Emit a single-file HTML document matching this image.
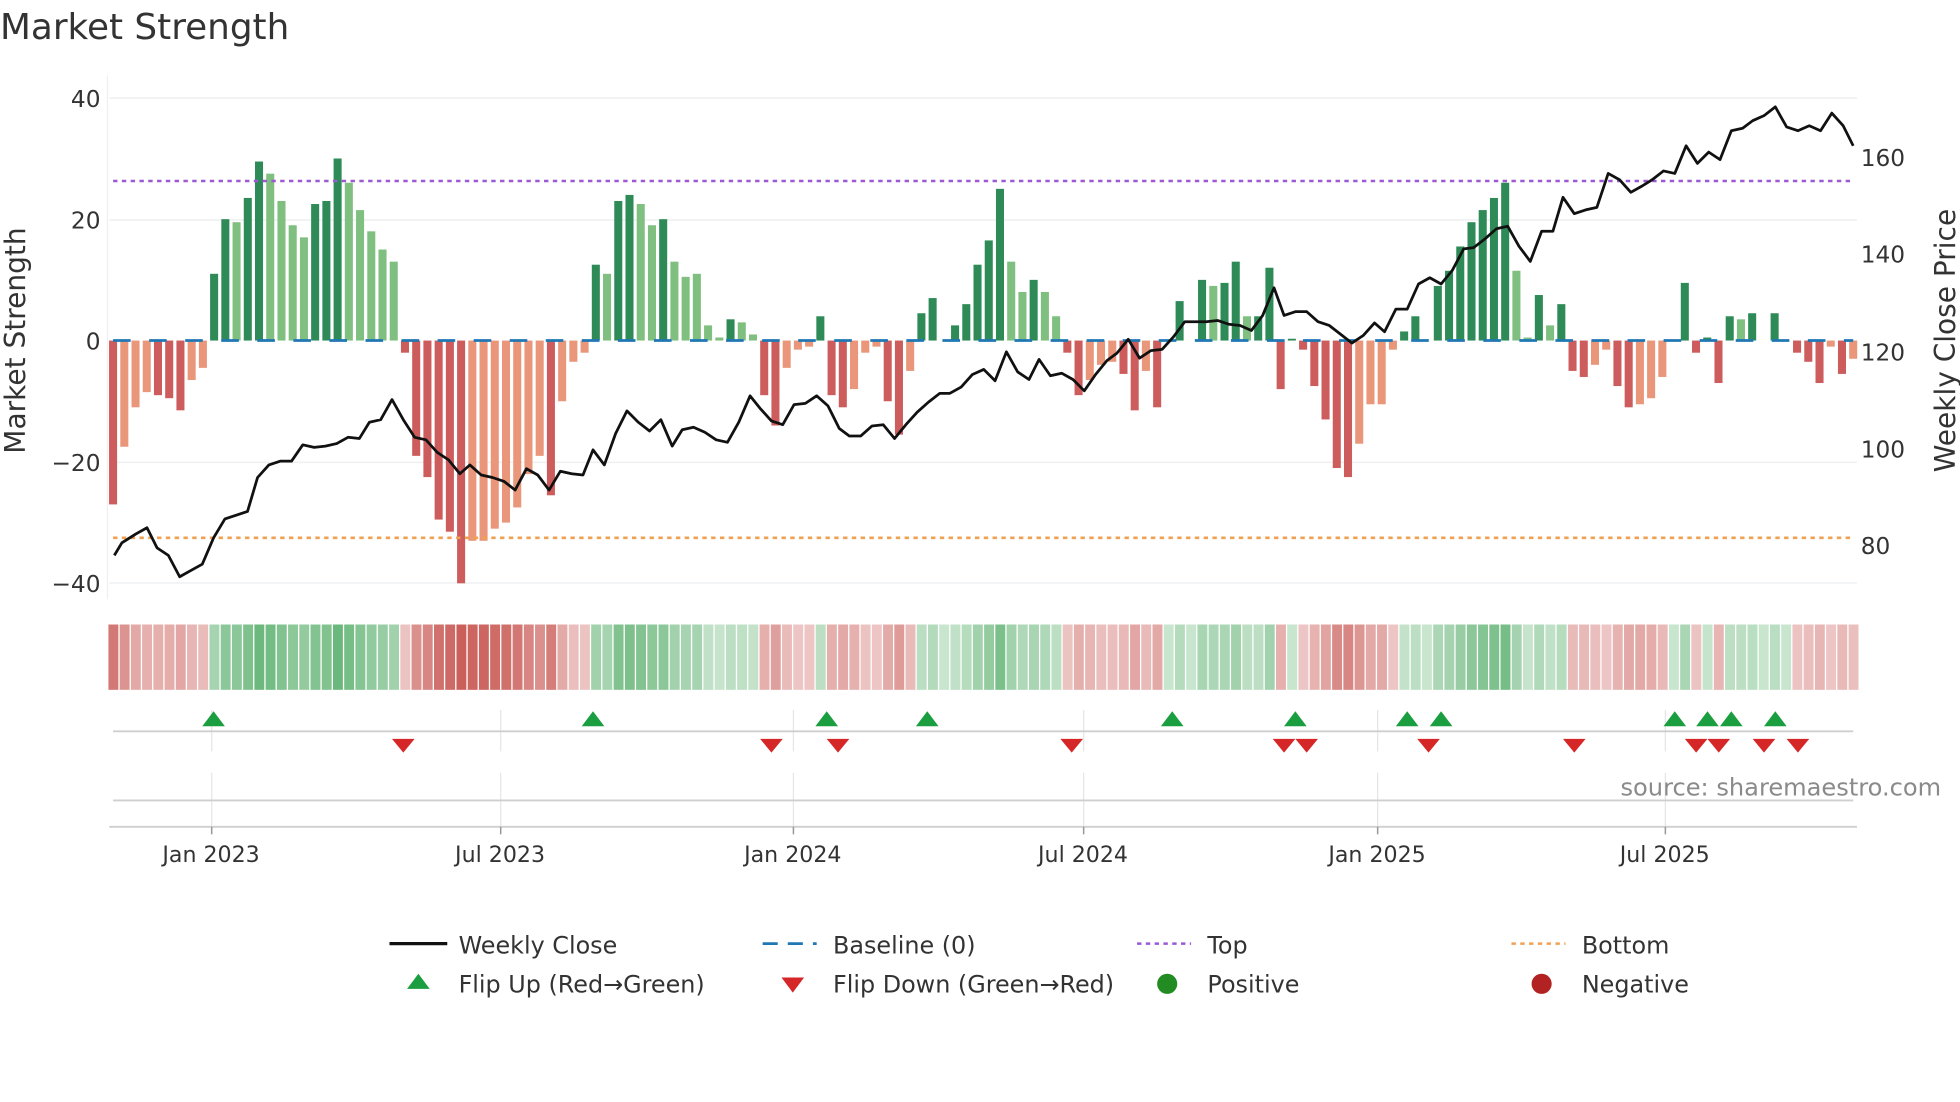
<!DOCTYPE html>
<html><head><meta charset="utf-8"><style>
html,body{margin:0;padding:0;background:#fff;width:1960px;height:1102px;overflow:hidden}
svg{display:block}
text{font-family:"DejaVu Sans","Liberation Sans",sans-serif;fill:#333}
</style></head><body>
<svg id="s" width="1960" height="1102" viewBox="0 0 1560 877" xmlns="http://www.w3.org/2000/svg">
<text x="0" y="31" font-size="28.5" fill="#333">Market Strength</text>
<g stroke="#eef0f3" stroke-width="1.2">
<line x1="87" x2="1478" y1="78" y2="78"/><line x1="87" x2="1478" y1="175" y2="175"/>
<line x1="87" x2="1478" y1="368" y2="368"/><line x1="87" x2="1478" y1="464" y2="464"/>
</g>
<line x1="85.5" x2="85.5" y1="60" y2="477" stroke="#f0f0f0" stroke-width="1"/>
<g font-size="18.5" text-anchor="end">
<text x="80" y="85">40</text><text x="80" y="182">20</text><text x="80" y="278">0</text>
<text x="80" y="375">−20</text><text x="80" y="471">−40</text>
</g>
<g font-size="18.5">
<text x="1481" y="132">160</text><text x="1481" y="209">140</text><text x="1481" y="287">120</text>
<text x="1481" y="364">100</text><text x="1481" y="441">80</text>
</g>
<text transform="translate(20,271) rotate(-90)" font-size="22.3" text-anchor="middle">Market Strength</text>
<text transform="translate(1556,271) rotate(-90)" font-size="22.3" text-anchor="middle">Weekly Close Price</text>
<g id="bars"></g>
<line x1="90" x2="1475" y1="271" y2="271" stroke="#1f77b4" stroke-width="2.2" stroke-dasharray="14,14.7"/>
<line x1="90" x2="1475" y1="144" y2="144" stroke="#9b59d6" stroke-width="2" stroke-dasharray="3.5,3.5"/>
<line x1="90" x2="1475" y1="428" y2="428" stroke="#f0a050" stroke-width="2" stroke-dasharray="3.5,3.5"/>
<polyline id="price" fill="none" stroke="#111" stroke-width="2.2" stroke-linejoin="round"/>
<g id="strip"></g>
<g stroke="#e6e6e6" stroke-width="1">
<line x1="168.5" x2="168.5" y1="565" y2="598"/><line x1="398.5" x2="398.5" y1="565" y2="598"/>
<line x1="631.5" x2="631.5" y1="565" y2="598"/><line x1="862.5" x2="862.5" y1="565" y2="598"/>
<line x1="1096.5" x2="1096.5" y1="565" y2="598"/><line x1="1325.5" x2="1325.5" y1="565" y2="598"/>
<line x1="168.5" x2="168.5" y1="615" y2="658"/><line x1="398.5" x2="398.5" y1="615" y2="658"/>
<line x1="631.5" x2="631.5" y1="615" y2="658"/><line x1="862.5" x2="862.5" y1="615" y2="658"/>
<line x1="1096.5" x2="1096.5" y1="615" y2="658"/><line x1="1325.5" x2="1325.5" y1="615" y2="658"/>
</g>
<line x1="90" x2="1475" y1="582" y2="582" stroke="#cfcfcf" stroke-width="1.5"/>
<line x1="90" x2="1475" y1="637" y2="637" stroke="#cfcfcf" stroke-width="1.5"/>
<line x1="87" x2="1478" y1="658" y2="658" stroke="#cfcfcf" stroke-width="1.5"/>
<g stroke="#999" stroke-width="1.2">
<line x1="168.5" x2="168.5" y1="658" y2="664"/><line x1="398.5" x2="398.5" y1="658" y2="664"/>
<line x1="631.5" x2="631.5" y1="658" y2="664"/><line x1="862.5" x2="862.5" y1="658" y2="664"/>
<line x1="1096.5" x2="1096.5" y1="658" y2="664"/><line x1="1325.5" x2="1325.5" y1="658" y2="664"/>
</g>
<g id="tri"></g>
<text x="1545" y="633" font-size="19.2" text-anchor="end" style="fill:#8a8a8a">source: sharemaestro.com</text>
<g font-size="17.6" text-anchor="middle">
<text x="168" y="686">Jan 2023</text><text x="398" y="686">Jul 2023</text><text x="631" y="686">Jan 2024</text>
<text x="862" y="686">Jul 2024</text><text x="1096" y="686">Jan 2025</text><text x="1325" y="686">Jul 2025</text>
</g>
<g font-size="19">
<line x1="310" x2="356" y1="751" y2="751" stroke="#111" stroke-width="2.5"/>
<text x="365" y="759">Weekly Close</text>
<line x1="607" x2="650" y1="751" y2="751" stroke="#1f77b4" stroke-width="2.2" stroke-dasharray="12,8"/>
<text x="663" y="759">Baseline (0)</text>
<line x1="905" x2="948" y1="751" y2="751" stroke="#9b59d6" stroke-width="2" stroke-dasharray="3.5,3.5"/>
<text x="961" y="759">Top</text>
<line x1="1203" x2="1246" y1="751" y2="751" stroke="#f0a050" stroke-width="2" stroke-dasharray="3.5,3.5"/>
<text x="1259" y="759">Bottom</text>
<polygon points="324,787 342,787 333,775" fill="#1a9e40"/>
<text x="365" y="790">Flip Up (Red→Green)</text>
<polygon points="622,778 640,778 631,790" fill="#d62728"/>
<text x="663" y="790">Flip Down (Green→Red)</text>
<circle cx="929" cy="783" r="8" fill="#228b22"/>
<text x="961" y="790">Positive</text>
<circle cx="1227" cy="783" r="8" fill="#b22222"/>
<text x="1259" y="790">Negative</text>
</g>
</svg>
<script>
var NS="http://www.w3.org/2000/svg";
var B=[[-27,1],[-17.5,0],[-11,0],[-8.5,0],[-9,1],[-9.5,1],[-11.5,1],[-6.5,0],[-4.5,0],[11,1],[20,1],[19.5,0],[23.5,1],[29.5,1],[27.5,0],[23,0],[19,0],[17,0],[22.5,1],[23,1],[30,1],[26,0],[21.5,0],[18,0],[15,0],[13,0],
[-2,1],[-19,1],[-22.5,1],[-29.5,1],[-31.5,1],[-40,1],[-33,0],[-33,0],[-31,0],[-30,0],[-27.5,0],[-22,0],[-19,0],[-25.5,1],[-10,0],[-3.5,0],[-2,0],
[12.5,1],[11,0],[23,1],[24,1],[22.5,0],[19,0],[20,1],[13,0],[10.5,0],[11,0],[2.5,0],[0.5,0],[3.5,1],[3,0],[1,0],
[-9,1],[-14,1],[-4.5,0],[-1.5,0],[-1,0],[4,1],[-9,1],[-11,1],[-8,0],[-2,0],[-1,0],[-10,1],[-15.5,1],[-5,0],
[4.5,1],[7,1],[0,1],[2.5,1],[6,1],[12.5,1],[16.5,1],[25,1],[13,0],[8,0],[10,1],[8,0],[4,0],
[-2,1],[-9,1],[-6.5,0],[-4,0],[-3.5,0],[-5.5,1],[-11.5,1],[-5,0],[-11,1],[0,1],
[6.5,1],[0,1],[10,1],[9,0],[9.5,1],[13,1],[4,0],[4,1],[12,1],
[-8,1],[0.3,1],[-1.5,1],[-7.5,1],[-13,1],[-21,1],[-22.5,1],[-17,0],[-10.5,0],[-10.5,0],[-1.5,0],
[1.5,1],[4,1],[0,1],[9,1],[11.5,1],[15.5,1],[19.5,1],[21.5,1],[23.5,1],[26,1],[11.5,0],[0.5,0],[7.5,1],[2.5,0],[6,1],
[-5,1],[-6,1],[-4,0],[-1.5,0],[-7.5,1],[-11,1],[-10.5,0],[-9.5,0],[-6,0],[0,1],[9.5,1],[-2,1],[0.5,1],[-7,1],
[4,1],[3.5,0],[4.5,1],[0,1],[4.5,1],[0,1],[-2,1],[-3.5,1],[-7,1],[-1,0],[-5.5,1],[-3,0]];
var n=B.length, x0=90, step=(1475-90)/(n-1), bw=6.4;
var bars=document.getElementById("bars"), strip=document.getElementById("strip");
for(var i=0;i<n;i++){
 var v=B[i][0],d=B[i][1],cx=x0+i*step;
 if(Math.abs(v)>0.05){
  var r=document.createElementNS(NS,"rect");
  var y=271-v*4.83, h=Math.abs(v*4.83);
  r.setAttribute("x",cx-bw/2);r.setAttribute("width",bw);
  r.setAttribute("y",v>0?y:271);r.setAttribute("height",h);
  r.setAttribute("fill",v>0?(d?"#2e8b57":"#7fbf7f"):(d?"#cd5c5c":"#e9967a"));
  bars.appendChild(r);
 }
 var s=document.createElementNS(NS,"rect");
 var a=0.28+0.55*Math.min(Math.abs(v)/35,1);
 s.setAttribute("x",cx-3.7);s.setAttribute("width",7.9);s.setAttribute("y",497);s.setAttribute("height",52);
 s.setAttribute("fill",v>=0?"#3aa050":"#c0403a");s.setAttribute("fill-opacity",a.toFixed(2));
 strip.appendChild(s);
}
var P="91,442 97,432 108,425 117,420 125,436 134,442 143,459 152,454 161,449 170,428 179,413 188,410 197,407 205,380 214,370 223,367 232,367 241,354 250,356 259,355 268,353 277,348 286,349 294,336 303,334 312,318 321,334 330,348 339,350 348,360 357,366 366,377 374,370 383,378 392,380 401,383 410,390 419,373 428,378 437,390 446,375 455,377 464,378 472,358 481,370 490,345 499,327 508,336 517,343 526,334 535,355 543,342 552,340 561,344 570,350 579,352 588,336 597,315 605,325 614,335 623,338 632,322 641,321 650,315 659,323 668,341 676,347 685,347 694,339 703,338 712,349 721,338 730,328 739,320 748,313 756,313 765,308 774,298 783,294 792,303 801,280 810,296 819,302 827,286 836,299 845,297 854,302 863,311 872,298 881,287 889,281 898,270 907,285 916,279 925,278 934,268 943,256 951,256 960,256 969,255 978,258 987,259 996,263 1005,251 1014,229 1022,251 1031,248 1040,248 1049,256 1058,259 1067,266 1076,273 1085,267 1094,257 1102,264 1111,246 1120,246 1129,226 1138,221 1147,226 1156,215 1165,198 1173,197 1182,190 1191,182 1200,180 1209,196 1218,208 1227,184 1236,184 1244,157 1253,170 1262,167 1271,165 1280,138 1289,143 1298,153 1307,148 1315,143 1324,136 1333,138 1342,116 1351,130 1360,121 1369,127 1378,104 1387,102 1395,96 1404,92 1413,85 1422,101 1431,104 1440,100 1449,104 1458,90 1467,100 1475,116";
document.getElementById("price").setAttribute("points",P);
var tri=document.getElementById("tri");
[170,472,658,738,933,1031,1120,1147,1333,1359,1378,1413].forEach(function(x){
 var p=document.createElementNS(NS,"polygon");p.setAttribute("points",(x-9)+",578 "+(x+9)+",578 "+x+",566");p.setAttribute("fill","#1a9e40");tri.appendChild(p);});
[321,614,667,853,1022,1040,1137,1253,1350,1368,1404,1431].forEach(function(x){
 var p=document.createElementNS(NS,"polygon");p.setAttribute("points",(x-9)+",588 "+(x+9)+",588 "+x+",599");p.setAttribute("fill","#d62728");tri.appendChild(p);});
</script>
</body></html>
